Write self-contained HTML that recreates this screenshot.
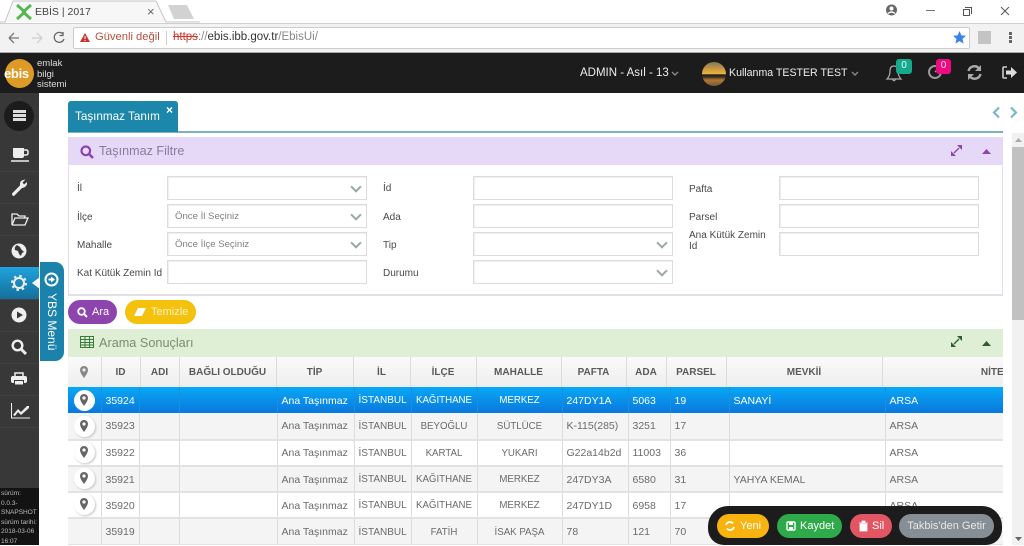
<!DOCTYPE html>
<html lang="tr"><head><meta charset="utf-8"><title>EBİS | 2017</title>
<style>
*{box-sizing:border-box}
html,body{margin:0;padding:0;width:1024px;height:545px;overflow:hidden;background:#fff;font-family:"Liberation Sans",sans-serif;color:#555}
.a{position:absolute}
.t{position:absolute;white-space:nowrap}
svg{position:absolute;overflow:visible}
.lbl{position:absolute;font-size:10px;color:#484848;white-space:nowrap}
.in{position:absolute;width:200px;height:24px;border:1px solid #dcdcdc;background:#fff;box-shadow:inset 1px 1px 1px #eee;font-size:9.6px;color:#808080;padding:6px 7px;white-space:nowrap}
.in.s:after{content:"";position:absolute;right:6px;top:6px;width:6px;height:6px;border:solid #9aa8a8;border-width:0 2px 2px 0;transform:rotate(45deg)}
.side{position:absolute;left:0;width:39px;height:1px;background:#424242}
table{position:absolute;border-collapse:collapse;table-layout:fixed;left:68px;font-size:10.5px}
td,th{padding:0 4px;overflow:hidden;white-space:nowrap;border-right:1px solid #dcdcdc}
#h{top:357px;width:950px}
#h th{height:30px;font-weight:bold;font-size:10px;color:#5a5a5a;text-align:center;background:linear-gradient(#fafafa,#eee);border-right:1px solid #dcdcdc}
#b{top:387px;width:935px}
#b td{height:26.3px;color:#6a6a6a;border-bottom:2px solid #e2e2e2;padding-top:1px}
#b td.c{text-align:center}
#b td:nth-child(6){font-size:10px}
#b td:nth-child(7),#b td:nth-child(8){font-size:9.7px}
#b tr:nth-child(even) td{background:#f4f4f4}
#b tr:nth-child(odd) td{background:#fff}
#b tr.sel td{background:linear-gradient(#08a8f6,#0a78dd);color:#fff;border-right:1px solid #1a8fdc;border-bottom:0}
.pin{position:absolute;left:74px;width:21px;height:21px;border-radius:50%;background:#fff;box-shadow:1px 1px 2px #c4c4c4}
.btn{position:absolute;height:24px;border-radius:12px;color:#fff;font-size:11px;line-height:25px;white-space:nowrap}
</style></head><body>

<!-- browser chrome -->
<div class="a" style="left:0;top:0;width:1024px;height:23px;background:#fff"></div>
<svg style="left:0;top:0" width="200" height="24"><path d="M0 22H5L13 1H156L166 22H200" fill="#f7f7f7" stroke="#c6c6c6"/><path d="M168 5H187L194 19H174Z" fill="#d2d2d2"/></svg>
<svg style="left:16px;top:4px" width="16" height="16"><path d="M1 1Q7 6 8 8Q9 6 15 1M1 15Q7 10 8 8Q9 10 15 15" fill="none" stroke="#56b84e" stroke-width="3"/></svg>
<div class="t" style="left:35px;top:6px;font-size:10.5px;color:#444">EBİS | 2017</div>
<div class="t" style="left:147px;top:4px;font-size:13px;color:#666">×</div>
<svg style="left:885px;top:3px" width="16" height="16"><circle cx="6.5" cy="7" r="5.5" fill="#666"/><circle cx="6.5" cy="5.5" r="2" fill="#fff"/><path d="M3 10.5Q6.5 7.5 10 10.5" stroke="#fff" stroke-width="1.4" fill="none"/></svg>
<div class="a" style="left:926px;top:10px;width:9px;height:1px;background:#777"></div>
<div class="a" style="left:963px;top:9px;width:7px;height:7px;border:1px solid #555"></div>
<div class="a" style="left:965px;top:7px;width:7px;height:7px;border-top:1px solid #555;border-right:1px solid #555"></div>
<svg style="left:1000px;top:6px" width="10" height="10"><path d="M1 1L9 9M9 1L1 9" stroke="#555"/></svg>

<div class="a" style="left:0;top:23px;width:1024px;height:30px;background:#f2f2f2;border-top:1px solid #cfcfcf;border-bottom:1px solid #aaa"></div>
<svg style="left:8px;top:31px" width="60" height="14"><path d="M1 7H11M1 7L6 2M1 7L6 12" stroke="#777" stroke-width="1.3" fill="none"/><path d="M24 7H34M34 7L29 2M34 7L29 12" stroke="#d0d0d0" stroke-width="1.3" fill="none"/><path d="M55 3A5 5 0 1 0 56 8M55 1V4.500H51.500" stroke="#666" stroke-width="1.300" fill="none"/></svg>
<div class="a" style="left:73px;top:27px;width:897px;height:22px;background:#fff;border:1px solid #ccc;border-radius:2px"></div>
<svg style="left:80px;top:33px" width="10" height="10"><path d="M5 0L10 9H0Z" fill="#c5372c"/><path d="M5 3V6M5 7V8" stroke="#fff"/></svg>
<div class="t" style="left:95px;top:31px;font-size:11.2px;color:#b5503f">Güvenli değil</div>
<div class="a" style="left:166px;top:31px;width:1px;height:14px;background:#ccc"></div>
<div class="t" style="left:173px;top:31px;font-size:11.5px;color:#888"><span style="color:#c5372c;text-decoration:line-through">https</span>://<span style="color:#333">ebis.ibb.gov.tr</span>/EbisUi/</div>
<svg style="left:953px;top:31px" width="13" height="13"><path d="M6.5 0L8.4 4.4L13 4.8L9.5 7.9L10.6 12.6L6.5 10.1L2.4 12.6L3.5 7.9L0 4.8L4.6 4.4Z" fill="#3b82e8"/></svg>
<div class="a" style="left:978px;top:31px;width:13px;height:13px;background:#c4c4c4"></div>
<div class="a" style="left:1009px;top:32px;width:3px;height:3px;background:#666;box-shadow:0 4px #666,0 8px #666"></div>

<!-- app header -->
<div class="a" style="left:0;top:53px;width:1024px;height:40px;background:#1c1c1c"></div>
<div class="a" style="left:5px;top:59px;width:29px;height:29px;border-radius:50%;background:#dd9a26"></div>
<div class="t" style="left:4px;top:66px;font-size:13px;font-weight:bold;color:#fff;letter-spacing:-.3px">ebis</div>
<div class="t" style="left:37px;top:59px;font-size:9.5px;line-height:10.5px;color:#ddd">emlak<br>bilgi<br>sistemi</div>
<div class="t" style="left:580px;top:67px;font-size:11.5px;color:#eee">ADMIN - Asıl - 13</div>
<svg style="left:671px;top:71px" width="8" height="6"><path d="M1 1L4 4L7 1" stroke="#888" stroke-width="1.4" fill="none"/></svg>
<div class="a" style="left:702px;top:62px;width:24px;height:24px;border-radius:50%;background:linear-gradient(#7e7a5c 0,#d99f3a 35%,#e7b64a 50%,#2a2620 52%,#2a2620 60%,#b5762f 75%,#6a5a44)"></div>
<div class="t" style="left:729px;top:67px;font-size:10.6px;line-height:13px;color:#eee">Kullanma TESTER TEST</div>
<svg style="left:851px;top:71px" width="8" height="6"><path d="M1 1L4 4L7 1" stroke="#888" stroke-width="1.4" fill="none"/></svg>
<svg style="left:886px;top:64px" width="18" height="18"><path d="M1 15H15Q12 12 12 7Q12 2 8 2Q4 2 4 7Q4 12 1 15ZM6.5 15.5Q8 18 9.5 15.5" stroke="#aaa" fill="none" stroke-width="1.2"/></svg>
<div class="a" style="left:896px;top:59px;width:16px;height:15px;background:#16a98c;border-radius:3px;color:#dff;font-size:10px;text-align:center;line-height:14px">0</div>
<svg style="left:927px;top:64px" width="16" height="16"><circle cx="8" cy="8" r="6" stroke="#999" stroke-width="2" fill="none"/><path d="M8 8L11 5" stroke="#999" stroke-width="1.5"/></svg>
<div class="a" style="left:936px;top:59px;width:15px;height:15px;background:#ef0a83;border-radius:3px;color:#fdd;font-size:10px;text-align:center;line-height:14px">0</div>
<svg style="left:967px;top:65px" width="15" height="15"><path d="M1.5 6A6 6 0 0 1 12 3.5M13.5 9A6 6 0 0 1 3 11.5" stroke="#aaa" stroke-width="2.4" fill="none"/><path d="M14 0V6H8Z M1 15V9H7Z" fill="#aaa"/></svg>
<svg style="left:1002px;top:66px" width="15" height="14"><path d="M5 1H2Q1 1 1 2V11Q1 12 2 12H5" stroke="#ccc" stroke-width="1.6" fill="none"/><path d="M4 4.500H9V1L15 6.500L9 12V8.500H4Z" fill="#ddd"/></svg>

<!-- sidebar -->
<div class="a" style="left:0;top:93px;width:39px;height:452px;background:#383838"></div>
<div class="a" style="left:4px;top:101px;width:30px;height:30px;border-radius:50%;background:#1c1c1c"></div>
<div class="a" style="left:13px;top:110px;width:13px;height:3px;background:#ddd;box-shadow:0 4px #ddd,0 8px #ddd"></div>
<div class="side" style="top:171px"></div><div class="side" style="top:203px"></div><div class="side" style="top:235px"></div><div class="side" style="top:299px"></div><div class="side" style="top:331px"></div><div class="side" style="top:363px"></div><div class="side" style="top:395px"></div><div class="side" style="top:427px"></div>
<svg style="left:11px;top:148px" width="18" height="16"><path d="M2 0H13V8Q13 10 11 10H4Q2 10 2 8Z" fill="#eee"/><path d="M13 2H15.500Q17 2 17 4V5Q17 7 15 7H13" stroke="#eee" stroke-width="1.500" fill="none"/><path d="M0 13H18" stroke="#eee" stroke-width="1.600"/></svg>
<svg style="left:11px;top:179px" width="17" height="17"><path d="M1 14.500L9 6.500Q8.500 2 12 1L14.500 .5L11.500 3.500L13 5.500L16 3Q16.500 8 11 9L3 17Q1 17 1 14.500Z" fill="#eee"/></svg>
<svg style="left:11px;top:212px" width="18" height="15"><path d="M1 13V2H6L8 4H14V6M1 13H14L17 6H4L1 13" stroke="#eee" stroke-width="1.300" fill="none"/></svg>
<svg style="left:11px;top:243px" width="16" height="16"><circle cx="8" cy="8" r="7.500" fill="#eee"/><path d="M6 2Q3 4 4 7L7 8L8 11L10 13L11 10L13 9L10 6L9 4Z" fill="#383838"/></svg>
<div class="a" style="left:0;top:267px;width:39px;height:32px;background:linear-gradient(#1fa3dc,#156f9b)"></div>
<svg style="left:11px;top:275px" width="16" height="16"><circle cx="8" cy="8" r="5" stroke="#eee" stroke-width="2" fill="none"/><circle cx="8" cy="8" r="7" stroke="#eee" stroke-width="2" stroke-dasharray="2.500 3" fill="none"/></svg>
<svg style="left:32px;top:277px" width="8" height="12"><path d="M8 0V12L0 6Z" fill="#fff"/></svg>
<svg style="left:11px;top:307px" width="16" height="16"><circle cx="8" cy="8" r="7.500" fill="#eee"/><path d="M6 4.500L12 8L6 11.500Z" fill="#383838"/></svg>
<svg style="left:11px;top:339px" width="16" height="16"><circle cx="6.500" cy="6.500" r="4.800" stroke="#eee" stroke-width="2.400" fill="none"/><path d="M10 10L15 15" stroke="#eee" stroke-width="3"/></svg>
<svg style="left:11px;top:372px" width="16" height="14"><path d="M4 5V1H12V5" stroke="#eee" stroke-width="1.500" fill="none"/><rect x="0" y="4" width="16" height="7" rx="2" fill="#eee"/><path d="M3.500 8.500H12.500V13H3.500Z" fill="#eee" stroke="#383838"/></svg>
<svg style="left:11px;top:403px" width="19" height="16"><path d="M.5 0V15H19" stroke="#eee" fill="none"/><path d="M2 12L7 6L10 9L16 3L18 3L18 5L10 12L7 9L4 13Z" fill="#eee"/></svg>
<div class="a" style="left:0;top:488px;width:39px;height:57px;background:#131313"></div>
<div class="t" style="left:1px;top:489px;font-size:6.5px;line-height:9.5px;color:#bbb">sürüm:<br>0.0.3-<br>SNAPSHOT<br>sürüm tarihi:<br>2018-03-06<br>16:07</div>

<!-- YBS tab -->
<div class="a" style="left:40px;top:262px;width:24px;height:99px;background:#1a82ab;border-radius:0 9px 9px 0"></div>
<svg style="left:44px;top:272px" width="15" height="15"><circle cx="7.500" cy="7.500" r="6" stroke="#fff" stroke-width="2" fill="none"/><path d="M4.500 6.500H7V4.500L11 7.500L7 10.500V8.500H4.500Z" fill="#fff"/></svg>
<div class="t" style="left:43px;top:293px;font-size:12px;color:#fff;writing-mode:vertical-rl;line-height:17px">YBS Menü</div>

<!-- tab strip -->
<div class="a" style="left:68px;top:131px;width:935px;height:2px;background:#7fb0bf"></div>
<div class="a" style="left:68px;top:101px;width:110px;height:31px;background:#1c87ab;border-radius:3px 3px 0 0"></div>
<div class="t" style="left:75px;top:110px;font-size:11.7px;line-height:14px;color:#fff">Taşınmaz Tanım</div>
<div class="t" style="left:166px;top:103px;font-size:12px;font-weight:bold;color:#fff">×</div>
<svg style="left:992px;top:106px" width="26" height="13"><path d="M7 1.500L2 6.500L7 11.500M19 1.500L24 6.500L19 11.500" stroke="#7ab4cc" stroke-width="2.200" fill="none"/></svg>

<!-- filter panel -->
<div class="a" style="left:68px;top:137px;width:935px;height:159px;border:1px solid #e4dcee;border-top:0;border-bottom:2px solid #e2dfe7"></div>
<div class="a" style="left:68px;top:137px;width:935px;height:28px;background:#e6d9f8"></div>
<svg style="left:80px;top:145px" width="14" height="14"><circle cx="5.800" cy="5.800" r="4.300" stroke="#8e44ad" stroke-width="2.200" fill="none"/><path d="M9 9L13 13" stroke="#8e44ad" stroke-width="2.600"/></svg>
<div class="t" style="left:99px;top:144px;font-size:12.6px;line-height:15px;color:#8a7aa0">Taşınmaz Filtre</div>
<svg style="left:950px;top:144px" width="13" height="13"><path d="M7 1H12V6ZM6 12H1V7Z" fill="#8e44ad"/><path d="M9 4L4 9" stroke="#8e44ad" stroke-width="1.300"/></svg>
<svg style="left:982px;top:149px" width="9" height="5"><path d="M4.500 0L9 5H0Z" fill="#8e44ad"/></svg>

<div class="lbl" style="left:77px;top:183px">İl</div>
<div class="lbl" style="left:77px;top:212px">İlçe</div>
<div class="lbl" style="left:77px;top:240px">Mahalle</div>
<div class="lbl" style="left:77px;top:268px">Kat Kütük Zemin Id</div>
<div class="in s" style="left:167px;top:176px"></div>
<div class="in s" style="left:167px;top:204px">Önce İl Seçiniz</div>
<div class="in s" style="left:167px;top:232px">Önce İlçe Seçiniz</div>
<div class="in" style="left:167px;top:260px"></div>

<div class="lbl" style="left:383px;top:183px">İd</div>
<div class="lbl" style="left:383px;top:212px">Ada</div>
<div class="lbl" style="left:383px;top:240px">Tip</div>
<div class="lbl" style="left:383px;top:268px">Durumu</div>
<div class="in" style="left:473px;top:176px"></div>
<div class="in" style="left:473px;top:204px"></div>
<div class="in s" style="left:473px;top:232px"></div>
<div class="in s" style="left:473px;top:260px"></div>

<div class="lbl" style="left:689px;top:184px">Pafta</div>
<div class="lbl" style="left:689px;top:212px">Parsel</div>
<div class="lbl" style="left:689px;top:231px;line-height:10.5px">Ana Kütük Zemin<br>Id</div>
<div class="in" style="left:779px;top:176px"></div>
<div class="in" style="left:779px;top:204px"></div>
<div class="in" style="left:779px;top:232px"></div>

<div class="btn" style="left:68px;top:300px;width:49px;background:#8e44ad;padding-left:24px">Ara</div>
<svg style="left:77px;top:307px" width="11" height="11"><circle cx="4.500" cy="4.500" r="3.300" stroke="#fff" stroke-width="1.800" fill="none"/><path d="M7 7L10 10" stroke="#fff" stroke-width="2"/></svg>
<div class="btn" style="left:125px;top:300px;width:71px;background:#f4c20d;padding-left:26px;color:#fdf3c8">Temizle</div>
<svg style="left:134px;top:308px" width="12" height="9"><path d="M4 0H12L8 8H0Z" fill="#fff"/></svg>

<!-- results panel -->
<div class="a" style="left:68px;top:329px;width:935px;height:28px;background:#deefd6"></div>
<svg style="left:80px;top:336px" width="14" height="12"><rect x=".5" y=".5" width="13" height="11" fill="none" stroke="#3a7a3a"/><path d="M0 3.500H14M0 6.500H14M0 9H14M5 0V12M9.500 0V12" stroke="#3a7a3a"/></svg>
<div class="t" style="left:99px;top:336px;font-size:12.7px;line-height:15px;color:#7c8a78">Arama Sonuçları</div>
<svg style="left:950px;top:335px" width="13" height="13"><path d="M7 1H12V6ZM6 12H1V7Z" fill="#2e5d2e"/><path d="M9 4L4 9" stroke="#2e5d2e" stroke-width="1.300"/></svg>
<svg style="left:982px;top:341px" width="9" height="5"><path d="M4.500 0L9 5H0Z" fill="#2e5d2e"/></svg>

<div class="a" style="left:68px;top:357px;width:935px;height:188px;overflow:hidden">
<table id="h" style="left:0;top:0">
<colgroup><col style="width:33px"><col style="width:39px"><col style="width:39px"><col style="width:97px"><col style="width:77px"><col style="width:57px"><col style="width:66px"><col style="width:85px"><col style="width:65px"><col style="width:40px"><col style="width:60px"><col style="width:156px"><col style="width:240px"></colgroup>
<tr><th></th><th>ID</th><th>ADI</th><th>BAĞLI OLDUĞU</th><th>TİP</th><th>İL</th><th>İLÇE</th><th>MAHALLE</th><th>PAFTA</th><th>ADA</th><th>PARSEL</th><th>MEVKİİ</th><th>NİTELİĞİ</th></tr>
</table>
<table id="b" style="left:0;top:30px">
<colgroup><col style="width:33px"><col style="width:38px"><col style="width:40px"><col style="width:98px"><col style="width:77px"><col style="width:57px"><col style="width:66px"><col style="width:85px"><col style="width:66px"><col style="width:42px"><col style="width:59px"><col style="width:156px"><col style="width:118px"></colgroup>
<tr class="sel"><td></td><td>35924</td><td></td><td></td><td>Ana Taşınmaz</td><td>İSTANBUL</td><td class="c">KAĞITHANE</td><td class="c">MERKEZ</td><td>247DY1A</td><td>5063</td><td>19</td><td>SANAYİ</td><td>ARSA</td></tr>
<tr><td></td><td>35923</td><td></td><td></td><td>Ana Taşınmaz</td><td>İSTANBUL</td><td class="c">BEYOĞLU</td><td class="c">SÜTLÜCE</td><td>K-115(285)</td><td>3251</td><td>17</td><td></td><td>ARSA</td></tr>
<tr><td></td><td>35922</td><td></td><td></td><td>Ana Taşınmaz</td><td>İSTANBUL</td><td class="c">KARTAL</td><td class="c">YUKARI</td><td>G22a14b2d</td><td>11003</td><td>36</td><td></td><td>ARSA</td></tr>
<tr><td></td><td>35921</td><td></td><td></td><td>Ana Taşınmaz</td><td>İSTANBUL</td><td class="c">KAĞITHANE</td><td class="c">MERKEZ</td><td>247DY3A</td><td>6580</td><td>31</td><td>YAHYA KEMAL</td><td>ARSA</td></tr>
<tr><td></td><td>35920</td><td></td><td></td><td>Ana Taşınmaz</td><td>İSTANBUL</td><td class="c">KAĞITHANE</td><td class="c">MERKEZ</td><td>247DY1D</td><td>6958</td><td>17</td><td></td><td>ARSA</td></tr>
<tr><td></td><td>35919</td><td></td><td></td><td>Ana Taşınmaz</td><td>İSTANBUL</td><td class="c">FATİH</td><td class="c">İSAK PAŞA</td><td>78</td><td>121</td><td>70</td><td></td><td>ARSA</td></tr>
</table>
</div>
<svg style="left:80px;top:366px" width="8" height="12"><path d="M4 0A4 4 0 0 1 8 4Q8 7 4 12Q0 7 0 4A4 4 0 0 1 4 0Z" fill="#888"/><circle cx="4" cy="4" r="1.600" fill="#eee"/></svg>
<div class="pin" style="top:390px;box-shadow:none"></div><div class="pin" style="top:416px"></div><div class="pin" style="top:442px"></div><div class="pin" style="top:468px"></div><div class="pin" style="top:494px"></div>
<svg style="left:80px;top:394px" width="8" height="12"><path d="M4 0A4 4 0 0 1 8 4Q8 7 4 12Q0 7 0 4A4 4 0 0 1 4 0Z" fill="#666"/><circle cx="4" cy="4" r="1.600" fill="#fff"/></svg>
<svg style="left:80px;top:420px" width="8" height="12"><path d="M4 0A4 4 0 0 1 8 4Q8 7 4 12Q0 7 0 4A4 4 0 0 1 4 0Z" fill="#666"/><circle cx="4" cy="4" r="1.600" fill="#fff"/></svg>
<svg style="left:80px;top:446px" width="8" height="12"><path d="M4 0A4 4 0 0 1 8 4Q8 7 4 12Q0 7 0 4A4 4 0 0 1 4 0Z" fill="#666"/><circle cx="4" cy="4" r="1.600" fill="#fff"/></svg>
<svg style="left:80px;top:472px" width="8" height="12"><path d="M4 0A4 4 0 0 1 8 4Q8 7 4 12Q0 7 0 4A4 4 0 0 1 4 0Z" fill="#666"/><circle cx="4" cy="4" r="1.600" fill="#fff"/></svg>
<svg style="left:80px;top:498px" width="8" height="12"><path d="M4 0A4 4 0 0 1 8 4Q8 7 4 12Q0 7 0 4A4 4 0 0 1 4 0Z" fill="#666"/><circle cx="4" cy="4" r="1.600" fill="#fff"/></svg>

<!-- scrollbar -->
<div class="a" style="left:1012px;top:133px;width:12px;height:412px;background:#f1f1f1"></div>
<div class="a" style="left:1012px;top:147px;width:12px;height:173px;background:#c1c1c1"></div>
<svg style="left:1015px;top:138px" width="7" height="4"><path d="M3.500 0L7 4H0Z" fill="#aaa"/></svg>
<svg style="left:1015px;top:537px" width="7" height="4"><path d="M3.500 4L7 0H0Z" fill="#666"/></svg>

<!-- floating action bar -->
<div class="a" style="left:708px;top:506px;width:294px;height:39px;background:#1c1c1c;border-radius:20px 20px 16px 16px"></div>
<div class="btn" style="left:717px;top:514px;width:52px;background:#f8b30f;padding-left:23px">Yeni</div>
<svg style="left:725px;top:521px" width="10" height="10"><path d="M1 4A4 4 0 0 1 8 2.500M9 6A4 4 0 0 1 2 7.500" stroke="#fff" stroke-width="1.800" fill="none"/></svg>
<div class="btn" style="left:777px;top:514px;width:65px;background:#2eaa4a;padding-left:23px">Kaydet</div>
<svg style="left:786px;top:521px" width="10" height="10"><rect x="1" y="1" width="8" height="8" rx="1" stroke="#fff" stroke-width="1.400" fill="none"/><path d="M3 1H7V4H3ZM3 6H7V9H3Z" fill="#fff"/></svg>
<div class="btn" style="left:850px;top:514px;width:42px;background:#e25563;padding-left:22px">Sil</div>
<svg style="left:859px;top:521px" width="9" height="10"><path d="M0 2H9M3 2V0H6V2M1 3H8V10H1Z" stroke="#fff" fill="#fff" stroke-width=".8"/></svg>
<div class="btn" style="left:899px;top:514px;width:95px;background:#868e96;text-align:center;color:#e8e8e8">Takbis'den Getir</div>

</body></html>
